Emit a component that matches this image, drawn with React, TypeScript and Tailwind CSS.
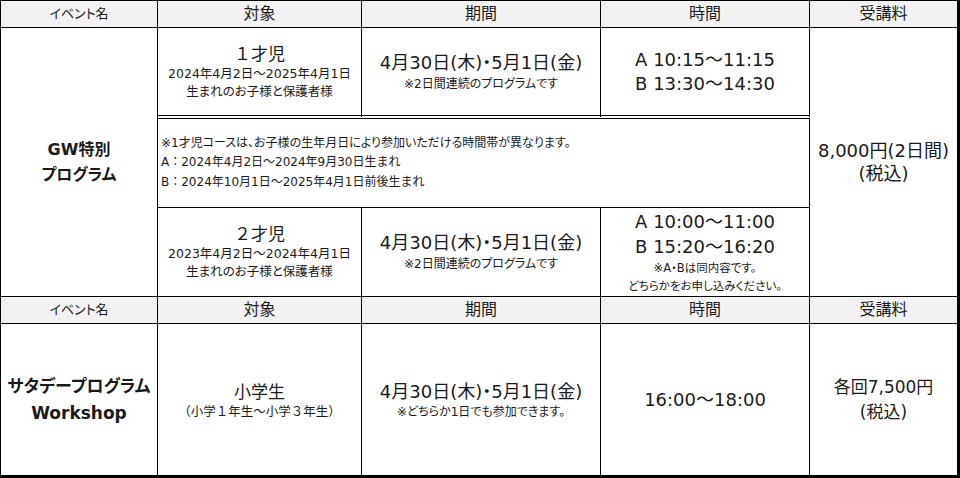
import React from "react";

const cell = "border-r border-b border-black flex flex-col items-center justify-center text-center";
const head = "border-r border-b border-black bg-[#f2f2f2] flex items-center justify-center";
const nopalt = "[font-feature-settings:normal]";

export default function App() {
  return (
    <div className="w-[960px] h-[478px] bg-white text-[#1a1a1a] font-['DejaVu_Sans','Noto_Sans_CJK_JP',sans-serif] [font-feature-settings:'palt']">
      <div className="grid grid-cols-[157px_204px_239px_209px_150px] grid-rows-[27px_91px_89px_89px_27px_154px] border-l border-t border-black">
        {/* header 1 */}
        <div className={`${head} text-[13px]`}>イベント名</div>
        <div className={`${head} text-[16px]`}>対象</div>
        <div className={`${head} text-[16px]`}>期間</div>
        <div className={`${head} text-[16px]`}>時間</div>
        <div className={`${head} text-[16px] border-r-[3px]`}>受講料</div>

        {/* event name GW */}
        <div className={`${cell} row-start-2 row-end-5 col-start-1 font-bold text-[16px] leading-[25px]`}>
          <div>GW特別</div>
          <div>プログラム</div>
        </div>

        {/* row A */}
        <div className={`${cell} row-start-2 col-start-2 border-b-4 border-double`}>
          <div className={`text-[17px] leading-[21px] ${nopalt}`}>１才児</div>
          <div className="text-[12.5px] leading-[18px]">2024年4月2日〜2025年4月1日</div>
          <div className="text-[12.5px] leading-[17px]">生まれのお子様と保護者様</div>
        </div>
        <div className={`${cell} row-start-2 col-start-3 border-b-4 border-double`}>
          <div className="text-[18px] leading-[24px]">4月30日(木)・5月1日(金)</div>
          <div className="text-[12px] leading-[18px]">※2日間連続のプログラムです</div>
        </div>
        <div className={`${cell} row-start-2 col-start-4 border-b-4 border-double text-[18px] leading-[24px]`}>
          <div>A 10:15〜11:15</div>
          <div>B 13:30〜14:30</div>
        </div>

        {/* fee GW */}
        <div className={`${cell} row-start-2 row-end-5 col-start-5 border-r-[3px] text-[18px] leading-[23px]`}>
          <div>8,000円(2日間)</div>
          <div>(税込)</div>
        </div>

        {/* note row */}
        <div className="row-start-3 col-start-2 col-end-5 border-r border-b border-black flex flex-col justify-center pl-[3px] text-[12px] leading-[19.5px]">
          <div>※1才児コースは、お子様の生年月日により参加いただける時間帯が異なります。</div>
          <div className={nopalt}>A：2024年4月2日〜2024年9月30日生まれ</div>
          <div className={nopalt}>B：2024年10月1日〜2025年4月1日前後生まれ</div>
        </div>

        {/* row C */}
        <div className={`${cell} row-start-4 col-start-2`}>
          <div className={`text-[17px] leading-[21px] ${nopalt}`}>２才児</div>
          <div className="text-[12.5px] leading-[18px]">2023年4月2日〜2024年4月1日</div>
          <div className="text-[12.5px] leading-[17px]">生まれのお子様と保護者様</div>
        </div>
        <div className={`${cell} row-start-4 col-start-3`}>
          <div className="text-[18px] leading-[24px]">4月30日(木)・5月1日(金)</div>
          <div className="text-[12px] leading-[18px]">※2日間連続のプログラムです</div>
        </div>
        <div className={`${cell} row-start-4 col-start-4`}>
          <div className="text-[18px] leading-[25px]">A 10:00〜11:00</div>
          <div className="text-[18px] leading-[25px]">B 15:20〜16:20</div>
          <div className="text-[11.5px] leading-[18px]">※A・Bは同内容です。</div>
          <div className="text-[11.5px] leading-[18px]">どちらかをお申し込みください。</div>
        </div>

        {/* header 2 */}
        <div className={`${head} row-start-5 col-start-1 text-[13px]`}>イベント名</div>
        <div className={`${head} row-start-5 col-start-2 text-[16px]`}>対象</div>
        <div className={`${head} row-start-5 col-start-3 text-[16px]`}>期間</div>
        <div className={`${head} row-start-5 col-start-4 text-[16px]`}>時間</div>
        <div className={`${head} row-start-5 col-start-5 text-[16px] border-r-[3px]`}>受講料</div>

        {/* row D */}
        <div className={`${cell} row-start-6 col-start-1 border-b-[3px] font-bold text-[17px] leading-[27px]`}>
          <div>サタデープログラム</div>
          <div>Workshop</div>
        </div>
        <div className={`${cell} row-start-6 col-start-2 border-b-[3px]`}>
          <div className="text-[17px] leading-[22px] pt-[3px]">小学生</div>
          <div className={`text-[12.5px] leading-[18px] ${nopalt}`}>（小学１年生〜小学３年生）</div>
        </div>
        <div className={`${cell} row-start-6 col-start-3 border-b-[3px]`}>
          <div className="text-[18px] leading-[22px] pt-[3px]">4月30日(木)・5月1日(金)</div>
          <div className="text-[12px] leading-[18px]">※どちらか1日でも参加できます。</div>
        </div>
        <div className={`${cell} row-start-6 col-start-4 border-b-[3px] text-[18px]`}>
          <div>16:00〜18:00</div>
        </div>
        <div className={`${cell} row-start-6 col-start-5 border-b-[3px] border-r-[3px] text-[17px] leading-[25px]`}>
          <div>各回7,500円</div>
          <div>(税込)</div>
        </div>
      </div>
    </div>
  );
}
